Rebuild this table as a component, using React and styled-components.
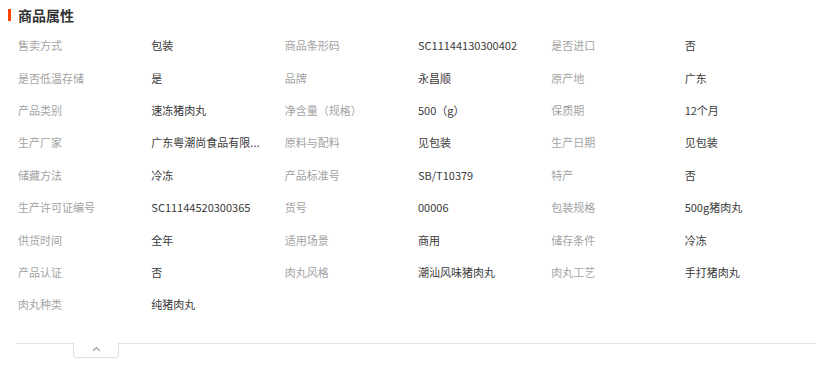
import React from "react";
import styled, { createGlobalStyle } from "styled-components";

const Global = createGlobalStyle`
  html, body { margin: 0; padding: 0; background: #fff; overflow: hidden; }
  body { font-family: "Noto Sans CJK SC", "Liberation Sans", sans-serif; }
`;

const Panel = styled.section`
  width: 823px;
  padding: 0 5px 0 16px;
  box-sizing: border-box;
`;

const Header = styled.div`
  height: 29px;
  display: flex;
  align-items: center;
  gap: 7px;
  margin-left: -8px;
`;

const Bar = styled.span`
  width: 3px;
  height: 12px;
  background: #ff4400;
`;

const Title = styled.h2`
  margin: 0;
  font-size: 14px;
  font-weight: 700;
  color: #333;
  line-height: 1;
`;

const Grid = styled.div`
  margin-left: 2px;
  width: 800px;
  display: grid;
  grid-template-columns: repeat(6, 1fr);
  grid-auto-rows: 32.4px;
  align-items: center;
`;

const Cell = styled.div`
  font-size: 11px;
  line-height: 14px;
  color: ${(p) => (p.$label ? "#a3a3a3" : "#3a3a3a")};
  white-space: nowrap;
`;

const Footer = styled.div`
  box-sizing: border-box;
  margin-top: 22px;
  width: 800px;
  border-top: 1px solid #e3e3e3;
  display: flex;
  padding-left: 57px;
`;

const Toggle = styled.button`
  margin-top: -1px;
  width: 46px;
  height: 15px;
  background: #fff;
  border: 1px solid #e0e0e0;
  border-top: none;
  border-radius: 0 0 4px 4px;
  padding: 0;
  display: flex;
  align-items: flex-start;
  justify-content: center;
  cursor: pointer;
`;

const data = [
  ["售卖方式", "包装", "商品条形码", "SC11144130300402", "是否进口", "否"],
  ["是否低温存储", "是", "品牌", "永昌顺", "原产地", "广东"],
  ["产品类别", "速冻猪肉丸", "净含量（规格）", "500（g）", "保质期", "12个月"],
  ["生产厂家", "广东粤潮尚食品有限...", "原料与配料", "见包装", "生产日期", "见包装"],
  ["储藏方法", "冷冻", "产品标准号", "SB/T10379", "特产", "否"],
  ["生产许可证编号", "SC11144520300365", "货号", "00006", "包装规格", "500g猪肉丸"],
  ["供货时间", "全年", "适用场景", "商用", "储存条件", "冷冻"],
  ["产品认证", "否", "肉丸风格", "潮汕风味猪肉丸", "肉丸工艺", "手打猪肉丸"],
  ["肉丸种类", "纯猪肉丸"],
];

export default function App() {
  return (
    <Panel>
      <Global />
      <Header>
        <Bar />
        <Title>商品属性</Title>
      </Header>
      <Grid>
        {data.map((row, r) =>
          row.map((t, i) => (
            <Cell key={`${r}-${i}`} $label={i % 2 === 0}>
              {t}
            </Cell>
          ))
        )}
      </Grid>
      <Footer>
        <Toggle aria-label="收起">
          <svg width="9" height="6" viewBox="0 0 9 6" style={{ marginTop: 3 }}>
            <path d="M1 5 L4.5 1.5 L8 5" fill="none" stroke="#999" strokeWidth="1.1" />
          </svg>
        </Toggle>
      </Footer>
    </Panel>
  );
}
